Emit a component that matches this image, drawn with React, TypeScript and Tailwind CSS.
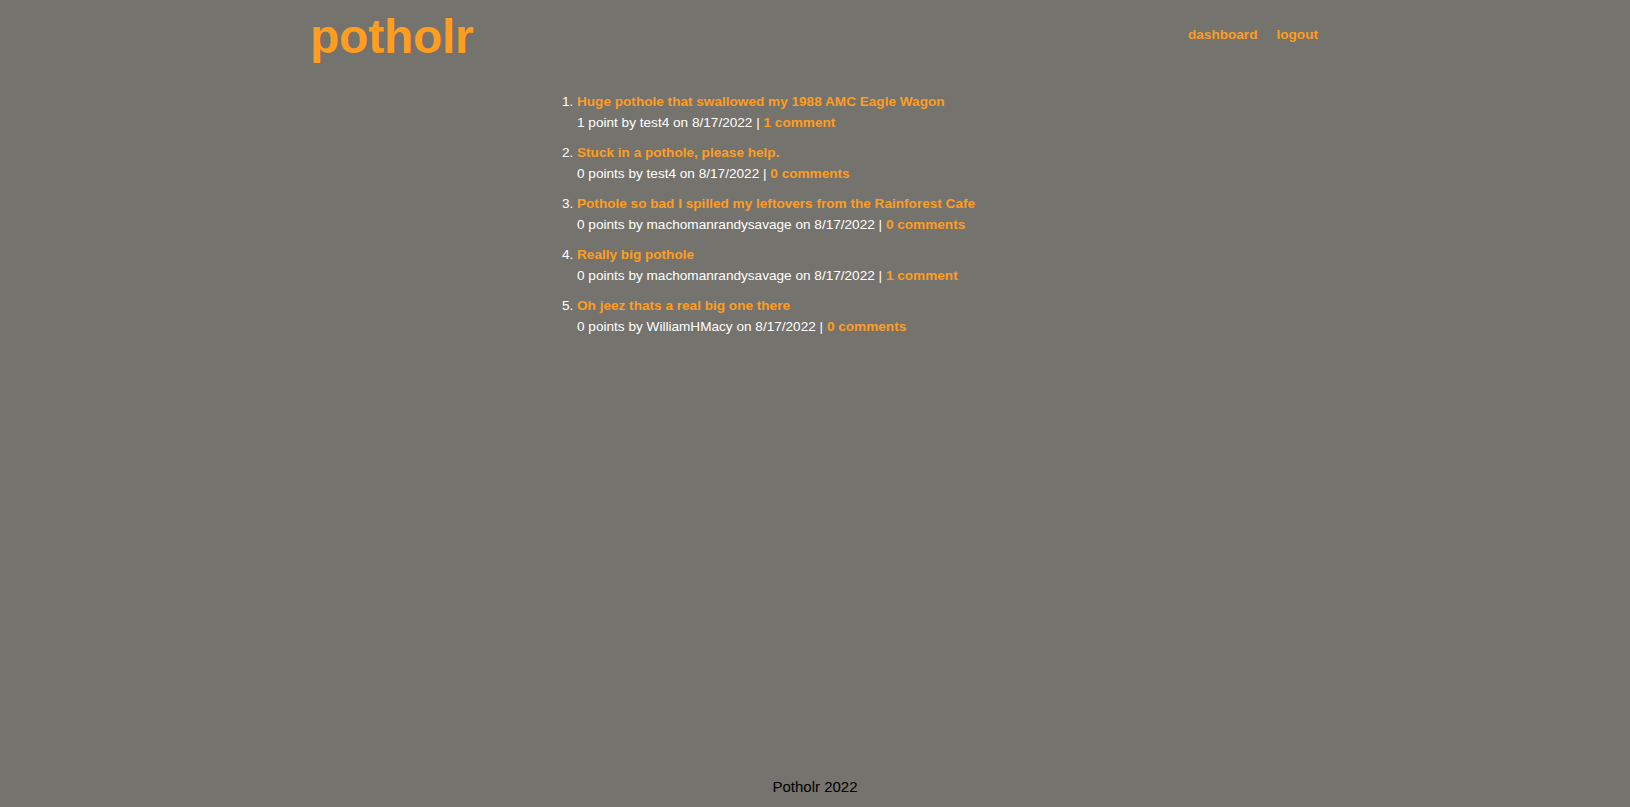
const posts = [
  { id: 1, title: "Huge pothole that swallowed my 1988 AMC Eagle Wagon", points: 1, user: "test4", date: "8/17/2022", comments: 1 },
  { id: 2, title: "Stuck in a pothole, please help.", points: 0, user: "test4", date: "8/17/2022", comments: 0 },
  { id: 3, title: "Pothole so bad I spilled my leftovers from the Rainforest Cafe", points: 0, user: "machomanrandysavage", date: "8/17/2022", comments: 0 },
  { id: 4, title: "Really big pothole", points: 0, user: "machomanrandysavage", date: "8/17/2022", comments: 1 },
  { id: 5, title: "Oh jeez thats a real big one there", points: 0, user: "WilliamHMacy", date: "8/17/2022", comments: 0 },
];

const App = () => {
  return (
    <div className="min-h-screen flex flex-col bg-[#75736d] font-['Liberation_Sans',Arial,sans-serif]">
      <header className="w-[1010px] mx-auto flex items-start justify-between pt-[9px]">
        <a className="text-[48px] font-bold leading-[56px] text-[#ff9d1f] tracking-[-0.25px]">potholr</a>
        <nav className="flex gap-[19px] pt-[16px] pr-[2px] text-[13.6px] font-bold text-[#ff9d1f]">
          <a>dashboard</a>
          <a>logout</a>
        </nav>
      </header>

      <main className="flex-1">
        <ol className="w-[556px] mx-auto list-decimal pl-10 mt-[26px] text-[13.6px] leading-[21px] text-white">
          {posts.map((post) => (
            <li key={post.id} className="mb-[9px]">
              <a className="font-bold text-[#ff9d1f]">{post.title}</a>
              <div>
                {post.points} {post.points === 1 ? "point" : "points"} by {post.user} on {post.date} |{" "}
                <a className="font-bold text-[#ff9d1f]">
                  {post.comments} {post.comments === 1 ? "comment" : "comments"}
                </a>
              </div>
            </li>
          ))}
        </ol>
      </main>

      <footer className="text-center text-[15px] text-black pb-[9px]">Potholr 2022</footer>
    </div>
  );
};
export default App;
